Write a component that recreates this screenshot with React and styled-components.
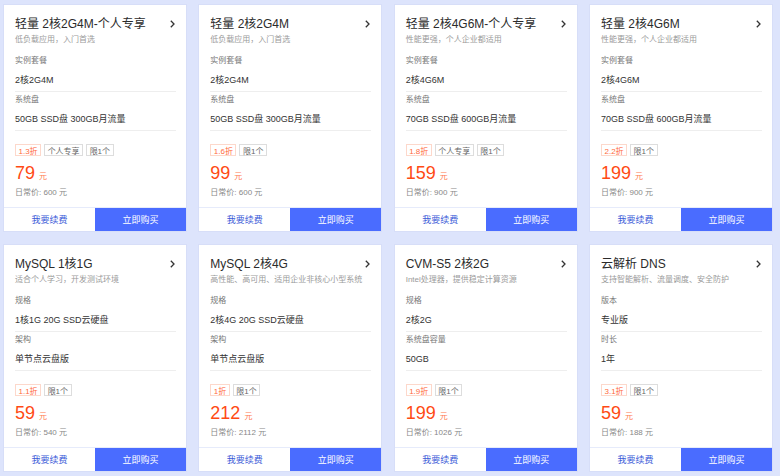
import React from 'react'
import styled, { createGlobalStyle } from 'styled-components'

const products = [
  {
    title: '轻量 2核2G4M-个人专享', desc: '低负载应用，入门首选',
    specs: [['实例套餐', '2核2G4M'], ['系统盘', '50GB SSD盘 300GB月流量']],
    off: '1.3折', tags: ['个人专享', '限1个'], price: '79', origin: '600',
  },
  {
    title: '轻量 2核2G4M', desc: '低负载应用，入门首选',
    specs: [['实例套餐', '2核2G4M'], ['系统盘', '50GB SSD盘 300GB月流量']],
    off: '1.6折', tags: ['限1个'], price: '99', origin: '600',
  },
  {
    title: '轻量 2核4G6M-个人专享', desc: '性能更强，个人企业都适用',
    specs: [['实例套餐', '2核4G6M'], ['系统盘', '70GB SSD盘 600GB月流量']],
    off: '1.8折', tags: ['个人专享', '限1个'], price: '159', origin: '900',
  },
  {
    title: '轻量 2核4G6M', desc: '性能更强，个人企业都适用',
    specs: [['实例套餐', '2核4G6M'], ['系统盘', '70GB SSD盘 600GB月流量']],
    off: '2.2折', tags: ['限1个'], price: '199', origin: '900',
  },
  {
    title: 'MySQL 1核1G', desc: '适合个人学习，开发测试环境',
    specs: [['规格', '1核1G 20G SSD云硬盘'], ['架构', '单节点云盘版']],
    off: '1.1折', tags: ['限1个'], price: '59', origin: '540',
  },
  {
    title: 'MySQL 2核4G', desc: '高性能、高可用、适用企业非核心小型系统',
    specs: [['规格', '2核4G 20G SSD云硬盘'], ['架构', '单节点云盘版']],
    off: '1折', tags: ['限1个'], price: '212', origin: '2112',
  },
  {
    title: 'CVM-S5 2核2G', desc: 'Intel处理器，提供稳定计算资源',
    specs: [['规格', '2核2G'], ['系统盘容量', '50GB']],
    off: '1.9折', tags: ['限1个'], price: '199', origin: '1026',
  },
  {
    title: '云解析 DNS', desc: '支持智能解析、流量调度、安全防护',
    specs: [['版本', '专业版'], ['时长', '1年']],
    off: '3.1折', tags: ['限1个'], price: '59', origin: '188',
  },
]

const Global = createGlobalStyle`
  html, body {
    margin: 0;
    background: #dde4fc;
  }
  body {
    font-family: "Liberation Sans", "Noto Sans CJK SC", sans-serif;
  }
`

const Grid = styled.div`
  display: grid;
  grid-template-columns: repeat(4, 1fr);
  grid-auto-rows: 226px;
  column-gap: 13.33px;
  row-gap: 14px;
  width: 768px;
  padding: 5px 8px 5px 4px;
`

const Card = styled.div`
  display: flex;
  flex-direction: column;
  background: #fff;
  box-shadow: 0 0 0 1px #d7def8;
`

const Body = styled.div`
  flex: 1;
  padding: 11px 10px 0 11px;
`

const Head = styled.div`
  display: flex;
  align-items: center;
  justify-content: space-between;
  height: 16px;
`

const Title = styled.div`
  font-size: 12px;
  line-height: 16px;
  color: #2b2b2b;
  white-space: nowrap;
`

const Desc = styled.div`
  margin-top: 2px;
  font-size: 8px;
  line-height: 12px;
  color: #9a9a9a;
  white-space: nowrap;
`

const Specs = styled.div`
  margin-top: 7px;
`

const Spec = styled.div`
  padding: 2px 0 4px;
  border-bottom: 1px solid #eeeeee;
`

const Label = styled.div`
  font-size: 8px;
  line-height: 12px;
  color: #777;
`

const Value = styled.div`
  margin-top: 6px;
  font-size: 9px;
  line-height: 14px;
  color: #333;
  white-space: nowrap;
`

const Tags = styled.div`
  display: flex;
  gap: 3px;
  margin-top: 13px;
`

const Tag = styled.span`
  display: inline-flex;
  align-items: center;
  box-sizing: border-box;
  height: 12px;
  padding: 0 2.5px;
  font-size: 8px;
  color: ${p => (p.$hot ? '#ff6a40' : '#666')};
  border: 1px solid ${p => (p.$hot ? '#fdd8cb' : '#dddddd')};
`

const Price = styled.div`
  display: flex;
  align-items: baseline;
  margin-top: 7px;
  height: 20px;
  color: #ff4a14;
`

const Amount = styled.span`
  font-size: 18px;
  line-height: 20px;
`

const Unit = styled.span`
  margin-left: 4px;
  font-size: 8px;
  color: #ff7a50;
`

const Origin = styled.div`
  margin-top: 4px;
  font-size: 8px;
  line-height: 12px;
  color: #888;
`

const Footer = styled.div`
  display: flex;
  height: 23px;
  border-top: 1px solid #e6ebfb;
`

const Button = styled.div`
  flex: 1;
  display: flex;
  align-items: center;
  justify-content: center;
  font-size: 9px;
  background: ${p => (p.$primary ? '#4a6cff' : '#fff')};
  color: ${p => (p.$primary ? '#fff' : '#3a5ad8')};
`

const Chevron = () => (
  <svg width="7" height="10" viewBox="0 0 7 10">
    <path d="M1.8 1.8 L5 5 L1.8 8.2" fill="none" stroke="#333" strokeWidth="1.3" />
  </svg>
)

const ProductCard = ({ item }) => (
  <Card>
    <Body>
      <Head>
        <Title>{item.title}</Title>
        <Chevron />
      </Head>
      <Desc>{item.desc}</Desc>
      <Specs>
        {item.specs.map(([k, v]) => (
          <Spec key={k}>
            <Label>{k}</Label>
            <Value>{v}</Value>
          </Spec>
        ))}
      </Specs>
      <Tags>
        <Tag $hot>{item.off}</Tag>
        {item.tags.map(t => <Tag key={t}>{t}</Tag>)}
      </Tags>
      <Price>
        <Amount>{item.price}</Amount>
        <Unit>元</Unit>
      </Price>
      <Origin>日常价: {item.origin} 元</Origin>
    </Body>
    <Footer>
      <Button>我要续费</Button>
      <Button $primary>立即购买</Button>
    </Footer>
  </Card>
)

export default function App() {
  return (
    <>
      <Global />
      <Grid>
        {products.map(p => <ProductCard key={p.title} item={p} />)}
      </Grid>
    </>
  )
}
